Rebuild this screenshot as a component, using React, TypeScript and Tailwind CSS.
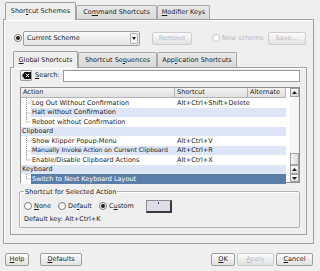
import React from 'react';

const Radio = ({ on, dim }: { on?: boolean; dim?: boolean }) => (
  <span
    className={`w-[8px] h-[8px] rounded-full border bg-white flex items-center justify-center shrink-0 ${
      dim ? 'border-[#c6c6c6]' : 'border-[#7a7a7a]'
    }`}
  >
    {on && <span className="w-[4px] h-[4px] rounded-full bg-[#1e1e1e]" />}
  </span>
);

const Btn = ({
  children,
  className,
  dim,
}: {
  children?: React.ReactNode;
  className: string;
  dim?: boolean;
}) => (
  <div
    className={`h-[13px] border rounded-[2px] bg-linear-to-b from-[#fbfbfb] to-[#e2e2e2] flex items-center justify-center shrink-0 ${
      dim ? 'text-[#b9b9b9] border-[#cdcdcd]' : 'border-[#9d9d9d]'
    } ${className}`}
  >
    {children}
  </div>
);

const Tab = ({
  children,
  className,
  selected,
}: {
  children: React.ReactNode;
  className: string;
  selected?: boolean;
}) =>
  selected ? (
    <div
      className={`relative z-10 -mb-px bg-[#efefef] border border-b-0 border-[#9f9f9f] rounded-t-[2px] flex items-center justify-center shrink-0 ${className}`}
    >
      {children}
    </div>
  ) : (
    <div
      className={`bg-linear-to-b from-[#e9e9e9] to-[#d9d9d9] border border-b-0 border-[#a9a9a9] rounded-t-[2px] flex items-center justify-center shrink-0 ${className}`}
    >
      {children}
    </div>
  );

const TreeLine = ({ last }: { last?: boolean }) => (
  <svg width="10" height="9.5" className="shrink-0 bg-white" viewBox="0 0 10 9.5">
    <line
      x1="5.5"
      y1="0"
      x2="5.5"
      y2={last ? 5 : 9.5}
      stroke="#9a9a9a"
      strokeWidth="1"
      strokeDasharray="1 1"
    />
    <line x1="5.5" y1="5" x2="10" y2="5" stroke="#9a9a9a" strokeWidth="1" strokeDasharray="1 1" />
  </svg>
);

type Row = { label: string; key?: string; child?: boolean; last?: boolean; sel?: boolean; tight?: boolean };

const rows: Row[] = [
  { label: 'Log Out Without Confirmation', key: 'Alt+Ctrl+Shift+Delete', child: true },
  { label: 'Halt without Confirmation', child: true },
  { label: 'Reboot without Confirmation', child: true, last: true },
  { label: 'Clipboard' },
  { label: 'Show Klipper Popup-Menu', key: 'Alt+Ctrl+V', child: true },
  { label: 'Manually Invoke Action on Current Clipboard', key: 'Alt+Ctrl+R', child: true, tight: true },
  { label: 'Enable/Disable Clipboard Actions', key: 'Alt+Ctrl+X', child: true, last: true },
  { label: 'Keyboard' },
  { label: 'Switch to Next Keyboard Layout', child: true, last: true, sel: true },
];

const ArrowBtn = ({ up, className }: { up?: boolean; className: string }) => (
  <div
    className={`w-[9px] border border-[#a2a2a2] bg-linear-to-b from-[#f8f8f8] to-[#dedede] flex items-center justify-center ${className}`}
  >
    <svg width="5" height="3" viewBox="0 0 5 3">
      <path d={up ? 'M0 3 L2.5 0 L5 3 Z' : 'M0 0 L2.5 3 L5 0 Z'} fill="#222" />
    </svg>
  </div>
);

export default function App() {
  return (
    <div className="w-[320px] h-[271px] bg-[#efefef] text-[#1c1c1c] text-[6.5px] leading-none font-['DejaVu_Sans',sans-serif] overflow-hidden">
      {/* outer tabs */}
      <div className="flex items-end h-[19px] pl-[5px]">
        <Tab selected className="w-[71px] h-[18px]">
          Shor<span className="underline">t</span>cut Schemes
        </Tab>
        <Tab className="w-[81px] h-[14px]">
          Co<span className="underline">m</span>mand Shortcuts
        </Tab>
        <Tab className="w-[53px] h-[14px]">
          <span className="underline">M</span>odifier Keys
        </Tab>
      </div>

      <div className="ml-[3px] w-[311px] h-[225px] border border-[#a0a0a0] shadow-[inset_1px_1px_0_#ffffff]">
        {/* scheme row */}
        <div className="mt-[10px] h-[16px] flex items-center pl-[10px]">
          <Radio on />
          <div className="ml-[1px] w-[117px] h-[15px] border border-[#a0a0a0] rounded-[2px] bg-linear-to-b from-[#f9f9f9] to-[#e3e3e3] flex items-center pl-[3px]">
            <span className="flex-1">Current Scheme</span>
            <div className="w-[8px] h-[11px] mr-[1px] border border-[#b0b0b0] rounded-[1px] bg-[#f4f4f4] flex items-center justify-center">
              <svg width="4" height="3" viewBox="0 0 4 3">
                <path d="M0 0 L2 3 L4 0 Z" fill="#222" />
              </svg>
            </div>
          </div>
          <Btn dim className="ml-[12px] w-[40px]">
            Remove
          </Btn>
          <div className="ml-[20px] flex items-center gap-[2px] text-[#b9b9b9]">
            <Radio dim />
            <span>New scheme</span>
          </div>
          <Btn dim className="ml-[4px] w-[38px]">
            Save...
          </Btn>
        </div>

        {/* inner tab widget */}
        <div className="ml-[6px] mt-[5px] w-[297px]">
          <div className="flex items-end h-[16px] pl-[3px]">
            <Tab selected className="w-[65px] h-[17px]">
              <span className="underline">G</span>lobal Shortcuts
            </Tab>
            <Tab className="w-[79px] h-[15px]">
              Shortcut Se<span className="underline">q</span>uences
            </Tab>
            <Tab className="w-[80px] h-[15px]">
              App<span className="underline">l</span>ication Shortcuts
            </Tab>
          </div>
          <div className="h-[168px] border border-[#a0a0a0] shadow-[inset_1px_1px_0_#ffffff]">
            {/* search */}
            <div className="mt-[1px] h-[13px] flex items-center pl-[9px]">
              <div className="w-[12px] h-[11px] border border-[#a0a0a0] rounded-[1px] bg-linear-to-b from-[#f9f9f9] to-[#e0e0e0] flex items-center justify-center">
                <svg width="9" height="7" viewBox="0 0 9 7">
                  <path d="M0 3.5 L2.5 0 H9 V7 H2.5 Z" fill="#111" />
                  <path d="M4 1.8 L7 5.2 M7 1.8 L4 5.2" stroke="#fff" strokeWidth="1" />
                </svg>
              </div>
              <span className="ml-[3px] w-[28px]">
                <span className="underline">S</span>earch:
              </span>
              <div className="w-[237px] h-[12px] border border-[#9a9a9a] bg-white" />
            </div>

            {/* list */}
            <div className="mt-[5px] ml-[9px] w-[280px] h-[96px] border border-[#8f8f8f] bg-white flex">
              <div className="w-[269px]">
                <div className="flex h-[10px] w-[265px] bg-linear-to-b from-[#f3f3f3] to-[#e0e0e0] border-b border-[#b4b4b4]">
                  <div className="w-[154px] pl-[2px] flex items-center border-r border-[#b4b4b4]">Action</div>
                  <div className="w-[73px] pl-[2px] flex items-center border-r border-[#b4b4b4]">Shortcut</div>
                  <div className="w-[38px] pl-[2px] flex items-center border-r border-[#b4b4b4]">Alternate</div>
                </div>
                {rows.map((r, i) => {
                  const bg = r.sel
                    ? 'bg-[#5a7ea7] text-white'
                    : i % 2 === 1
                    ? 'bg-[#dde5f6]'
                    : 'bg-white';
                  return (
                    <div key={i} className="flex h-[9.5px] w-[265px] whitespace-nowrap">
                      {r.child ? (
                        <>
                          <TreeLine last={r.last} />
                          <div className={`flex flex-1 items-center ${bg}`}>
                            <div
                              className={`w-[144px] pl-[1px] ${
                                r.tight ? 'text-[6.2px] tracking-[-0.05px]' : ''
                              }`}
                            >
                              {r.label}
                            </div>
                            <div className="pl-[2px]">{r.key}</div>
                          </div>
                        </>
                      ) : (
                        <div className={`flex flex-1 items-center pl-[1px] ${bg}`}>{r.label}</div>
                      )}
                    </div>
                  );
                })}
              </div>
              <div className="w-[9px] flex flex-col bg-[#f6f6f6]">
                <ArrowBtn up className="h-[9px]" />
                <div className="flex-1" />
                <div className="h-[12px] border border-[#a2a2a2] bg-linear-to-r from-[#f7f7f7] to-[#dcdcdc]" />
                <ArrowBtn up className="h-[9px]" />
                <ArrowBtn className="h-[8px]" />
              </div>
            </div>

            {/* group box */}
            <div className="mt-[8px] ml-[8px] w-[281px] h-[37px] border border-[#b2b2b2] shadow-[inset_1px_1px_0_#ffffff] rounded-[2px] flex flex-col">
              <div className="-mt-[4px] ml-[4px] px-[1px] self-start bg-[#efefef] h-[8px] flex items-center">
                Shortcut for Selected Action
              </div>
              <div className="mt-[3px] h-[14px] flex items-center pl-[4px]">
                <Radio />
                <span className="ml-[2px] w-[24px]">
                  <span className="underline">N</span>one
                </span>
                <Radio />
                <span className="ml-[2px] w-[31px]">
                  De<span className="underline">f</span>ault
                </span>
                <Radio on />
                <span className="ml-[2px] w-[37px]">
                  C<span className="underline">u</span>stom
                </span>
                <div className="w-[26px] h-[13px] border border-[#8a8a8a] border-r-[#3a3a3a] border-b-[#3a3a3a] border-r-[2px] border-b-[2px] bg-[#dedde7] flex justify-center">
                  <div className="mt-[1px] w-[1px] h-[2px] bg-[#444]" />
                </div>
              </div>
              <div className="mt-[3px] pl-[4px]">Default key: Alt+Ctrl+K</div>
            </div>
          </div>
        </div>
      </div>

      {/* bottom buttons */}
      <div className="mt-[9px] flex items-center pl-[5px]">
        <Btn className="w-[24px]">
          <span className="underline">H</span>elp
        </Btn>
        <Btn className="ml-[11px] w-[42px]">
          <span className="underline">D</span>efaults
        </Btn>
        <Btn className="ml-[129px] w-[24px]">
          <span className="underline">O</span>K
        </Btn>
        <Btn dim className="ml-[2px] w-[37px]">
          <span className="underline">A</span>pply
        </Btn>
        <Btn className="ml-[2px] w-[37px]">
          <span className="underline">C</span>ancel
        </Btn>
      </div>
    </div>
  );
}
